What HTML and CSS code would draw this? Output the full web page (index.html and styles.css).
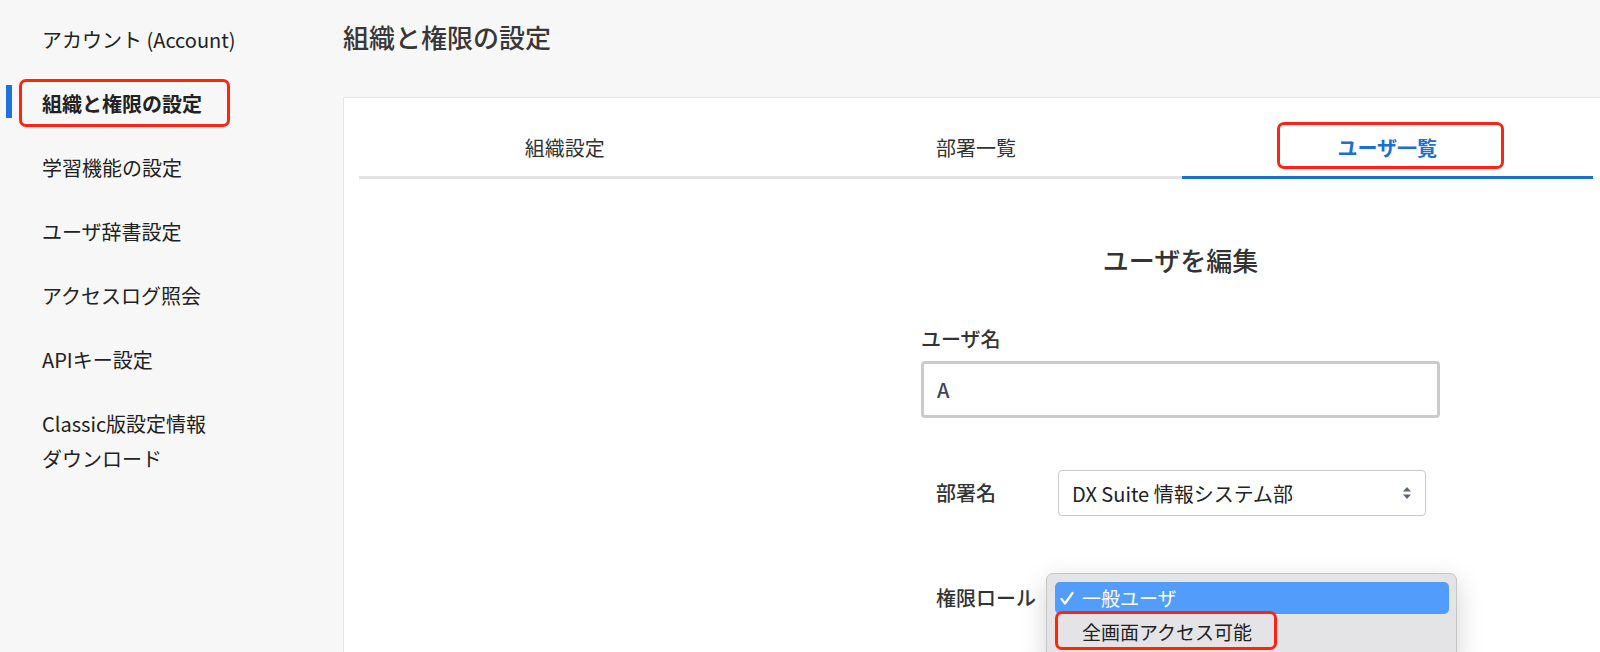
FILE: index.html
```html
<!DOCTYPE html>
<html lang="ja">
<head>
<meta charset="utf-8">
<title>組織と権限の設定</title>
<link rel="stylesheet" href="styles.css">
</head>
<body>
<div class="layout">
  <aside class="sidebar">
    <nav class="nav">
      <a class="nav-item">アカウント (Account)</a>
      <a class="nav-item active">組織と権限の設定<span class="mark mark-nav"></span></a>
      <a class="nav-item">学習機能の設定</a>
      <a class="nav-item">ユーザ辞書設定</a>
      <a class="nav-item">アクセスログ照会</a>
      <a class="nav-item">APIキー設定</a>
      <a class="nav-item">Classic版設定情報<br>ダウンロード</a>
    </nav>
  </aside>
  <main class="main">
    <h1 class="page-title">組織と権限の設定</h1>
    <section class="card">
      <div class="tabs">
        <div class="tab">組織設定</div>
        <div class="tab">部署一覧</div>
        <div class="tab active">ユーザ一覧<span class="mark mark-tab"></span></div>
      </div>
      <div class="edit">
        <h2 class="edit-title">ユーザを編集</h2>
        <label class="field-label">ユーザ名</label>
        <div class="text-input">A</div>
        <div class="row">
          <span class="row-label">部署名</span>
          <div class="select">
            <span>DX Suite 情報システム部</span>
            <svg class="updown" width="10" height="14" viewBox="0 0 10 14"><polygon points="1,5.5 5,1 9,5.5"/><polygon points="1,8.5 5,13 9,8.5"/></svg>
          </div>
        </div>
        <div class="row row-role">
          <span class="row-label">権限ロール</span>
          <div class="select-wrap">
            <div class="select"></div>
            <div class="popup">
              <div class="option selected"><svg class="check" width="14" height="15" viewBox="0 0 14 15"><polyline points="1.5,8 5,12.5 12.5,2"/></svg>一般ユーザ</div>
              <div class="option">全画面アクセス可能<span class="mark mark-opt"></span></div>
            </div>
          </div>
        </div>
      </div>
    </section>
  </main>
</div>
</body>
</html>
```
FILE: styles.css
```css
html, body {
  margin: 0;
  padding: 0;
  height: 652px;
  overflow: hidden;
  background: #f7f7f7;
  font-family: "Noto Sans CJK JP", "Noto Sans", "DejaVu Sans", sans-serif;
  color: #222;
}

.layout {
  display: flex;
  min-height: 652px;
}

.sidebar {
  width: 343px;
  flex: 0 0 343px;
}

.nav {
  padding-top: 8px;
}

.nav-item {
  display: block;
  position: relative;
  padding: 14px 0 15px 42px;
  font-size: 20px;
  line-height: 35px;
  color: #222;
  text-decoration: none;
}

.nav-item.active {
  font-weight: 700;
}

.nav-item.active::before {
  content: "";
  position: absolute;
  left: 6px;
  top: 13px;
  width: 6px;
  height: 33px;
  background: #1b74d9;
}

.mark {
  position: absolute;
  box-sizing: border-box;
  border: 3px solid #ff2410;
  border-radius: 7px;
  pointer-events: none;
}

.mark-nav {
  left: 19px;
  top: 7px;
  width: 211px;
  height: 48px;
}

.main {
  flex: 1;
  margin-right: -8px;
  padding-top: 19px;
}

.page-title {
  margin: 0 0 42px;
  font-size: 26px;
  line-height: 36px;
  font-weight: 500;
  color: #383838;
}

.card {
  background: #fff;
  border: 1px solid #e6e6e6;
  border-right: 0;
  padding: 0 15px;
  min-height: 560px;
}

.tabs {
  display: grid;
  grid-template-columns: repeat(3, 1fr);
  border-bottom: 3px solid #e2e2e2;
}

.tab {
  position: relative;
  text-align: center;
  padding: 35px 0 13px;
  font-size: 20px;
  line-height: 30px;
  color: #333;
}

.tab.active {
  color: #1a6fd3;
  font-weight: 700;
  border-bottom: 3px solid #1a6fd3;
  margin-bottom: -3px;
}

.mark-tab {
  left: 95px;
  top: 24px;
  width: 227px;
  height: 47px;
}

.edit {
  width: 519px;
  margin-left: 562px;
  padding-top: 63px;
}

.edit-title {
  margin: 0;
  text-align: center;
  font-size: 26px;
  line-height: 36px;
  font-weight: 500;
  color: #333;
}

.field-label {
  display: block;
  margin-top: 46px;
  font-size: 20px;
  line-height: 30px;
  font-weight: 500;
  color: #333;
}

.text-input {
  box-sizing: border-box;
  margin-top: 7px;
  height: 57px;
  border: 3px solid #cbcbcb;
  border-radius: 4px;
  padding-left: 13px;
  font-size: 20px;
  line-height: 51px;
  color: #3a4660;
  font-weight: 500;
}

.row {
  display: flex;
  align-items: center;
  padding-left: 15px;
  margin-top: 52px;
}

.row-role {
  margin-top: 59px;
}

.row-label {
  width: 122px;
  flex: 0 0 122px;
  font-size: 20px;
  line-height: 30px;
  color: #333;
  font-weight: 500;
}

.select-wrap {
  position: relative;
}

.select {
  box-sizing: border-box;
  width: 368px;
  height: 46px;
  border: 1px solid #c9c9c9;
  border-radius: 4px;
  background: #fff;
  padding: 0 13px 0 13px;
  display: flex;
  align-items: center;
  justify-content: space-between;
  font-size: 20px;
  color: #222;
}

.updown {
  fill: #5d6679;
}

.popup {
  position: absolute;
  top: -2px;
  left: -12px;
  width: 411px;
  height: 90px;
  box-sizing: border-box;
  background: #e4e4e7;
  border: 1px solid #c6c6ca;
  border-radius: 7px;
  padding: 8px 7px 0 8px;
  box-shadow: 0 8px 26px rgba(0, 0, 0, 0.18);
}

.option {
  position: relative;
  height: 36px;
  line-height: 36px;
  padding-left: 27px;
  font-size: 19px;
  color: #222;
  border-radius: 5px;
}

.option.selected {
  height: 32px;
  line-height: 32px;
  background: #529cfb;
  color: #fff;
}

.check {
  position: absolute;
  left: 5px;
  top: 9px;
  fill: none;
  stroke: #fff;
  stroke-width: 2.2;
  stroke-linecap: round;
  stroke-linejoin: round;
}

.mark-opt {
  left: 0;
  top: -3px;
  width: 222px;
  height: 39px;
}
```
